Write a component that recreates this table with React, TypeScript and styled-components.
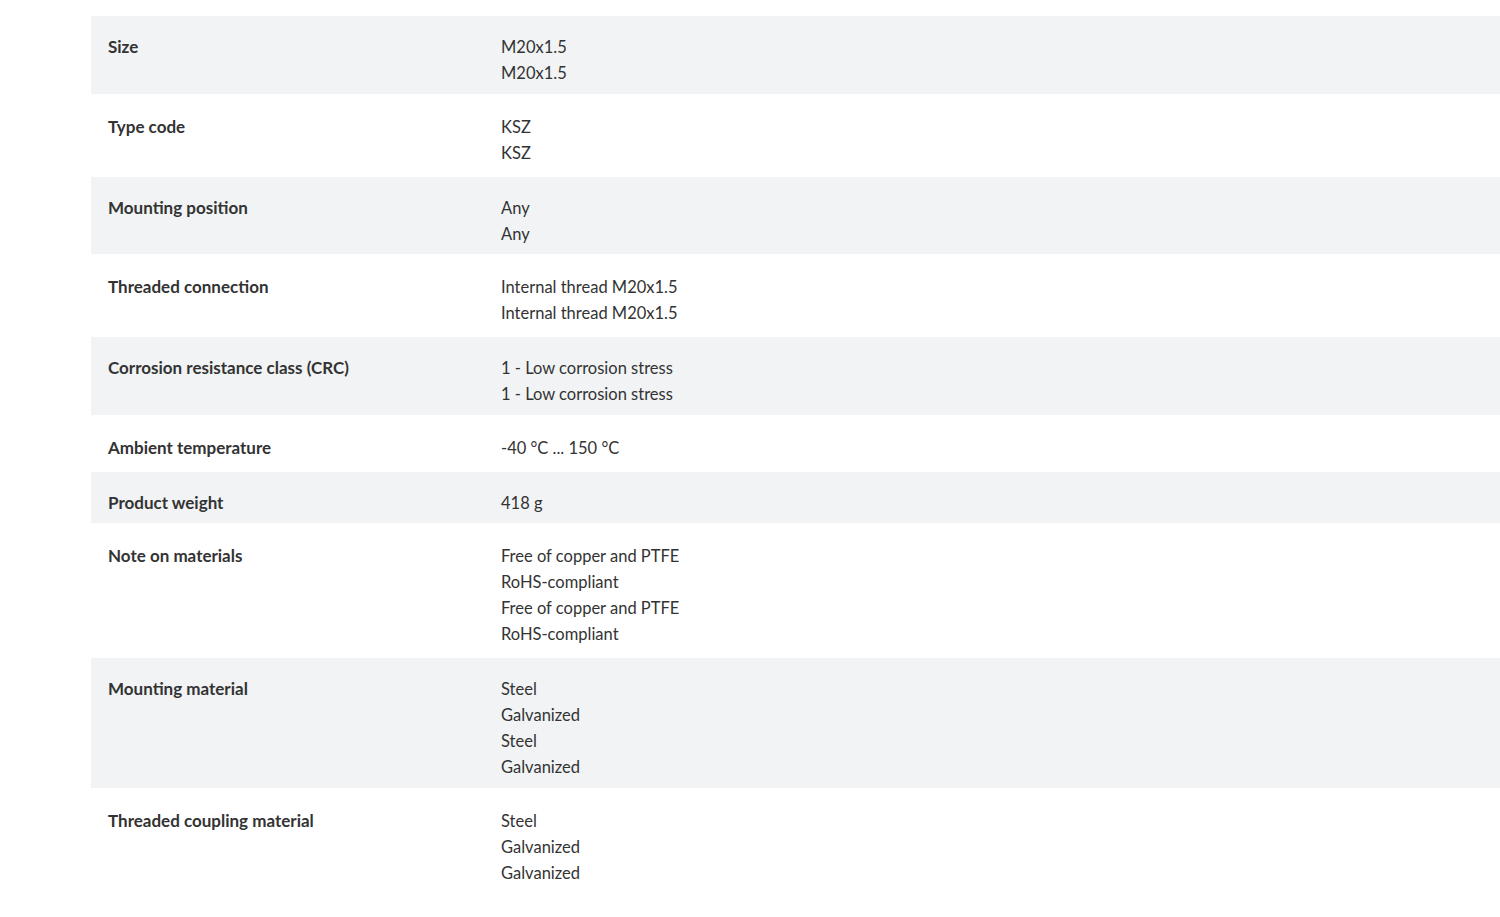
import styled, {createGlobalStyle} from "styled-components";

const GlobalStyle = createGlobalStyle`
    html, body {
        margin: 0;
        padding: 0;
        background: #ffffff;
    }

    body {
        font-family: Lato, "Liberation Sans", sans-serif;
        color: #333333;
        overflow: hidden;
    }
`

type Spec = {
    label: string;
    values: string[];
};

const specs: Spec[] = [
    {label: 'Size', values: ['M20x1.5', 'M20x1.5']},
    {label: 'Type code', values: ['KSZ', 'KSZ']},
    {label: 'Mounting position', values: ['Any', 'Any']},
    {label: 'Threaded connection', values: ['Internal thread M20x1.5', 'Internal thread M20x1.5']},
    {label: 'Corrosion resistance class (CRC)', values: ['1 - Low corrosion stress', '1 - Low corrosion stress']},
    {label: 'Ambient temperature', values: ['-40 °C ... 150 °C']},
    {label: 'Product weight', values: ['418 g']},
    {
        label: 'Note on materials',
        values: ['Free of copper and PTFE', 'RoHS-compliant', 'Free of copper and PTFE', 'RoHS-compliant']
    },
    {label: 'Mounting material', values: ['Steel', 'Galvanized', 'Steel', 'Galvanized']},
    {label: 'Threaded coupling material', values: ['Steel', 'Galvanized', 'Galvanized']},
];


export default function App() {
    return (
        <>
            <GlobalStyle/>
            <Page>
                <SpecTable>
                    {specs.map((spec, i) => (
                        <SpecRow key={spec.label} $shaded={i % 2 === 0}>
                            <SpecLabel>{spec.label}</SpecLabel>
                            <SpecValues>
                                {spec.values.map((v, j) => (
                                    <SpecValue key={j}>{v}</SpecValue>
                                ))}
                            </SpecValues>
                        </SpecRow>
                    ))}
                </SpecTable>
            </Page>
        </>
    );
}


const Page = styled.main`
    padding: 16px 0 0 91px;
    min-height: 917px;
    box-sizing: border-box;
`

const SpecTable = styled.div`
    display: flex;
    flex-direction: column;
`

// shaded rows sit a little tighter than the white ones
const SpecRow = styled.div<{ $shaded: boolean }>`
    display: grid;
    grid-template-columns: 393px 1fr;
    padding: ${p => p.$shaded ? '18px 0 7.5px 17px' : '20px 0 11px 17px'};
    background: ${p => p.$shaded ? '#f1f3f5' : '#ffffff'};
`

const SpecLabel = styled.div`
    font-weight: 700;
    font-size: 17px;
    line-height: 26px;
    color: #333333;
`

const SpecValues = styled.div`
    display: flex;
    flex-direction: column;
`

const SpecValue = styled.div`
    font-weight: 400;
    font-size: 16.5px;
    line-height: 26px;
    color: #333333;
`
